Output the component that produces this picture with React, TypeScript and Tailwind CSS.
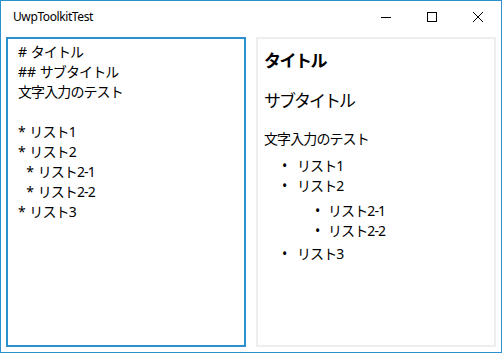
export default function App() {
  const font = { fontFamily: '"Noto Sans", "Noto Sans CJK JP", sans-serif' };
  const P = ({ children }: { children: string }) => (
    <span className="tracking-normal">{children}</span>
  );
  return (
    <div
      className="w-[502px] h-[353px] border border-[#2b90ce] bg-white flex flex-col text-black overflow-hidden"
      style={font}
    >
      <div className="h-[31px] flex items-center shrink-0">
        <div className="pl-[12px] text-[12px] leading-[16px] tracking-[-0.4px]">UwpToolkitTest</div>
        <div className="ml-auto flex h-full">
          <div className="w-[46px] h-full flex items-center justify-center">
            <svg width="10" height="10" viewBox="0 0 10 10">
              <line x1="0" y1="5.5" x2="10" y2="5.5" stroke="#000" strokeWidth="1" />
            </svg>
          </div>
          <div className="w-[46px] h-full flex items-center justify-center">
            <svg width="10" height="10" viewBox="0 0 10 10">
              <rect x="0.5" y="0.5" width="9" height="9" fill="none" stroke="#000" strokeWidth="1" />
            </svg>
          </div>
          <div className="w-[46px] h-full flex items-center justify-center">
            <svg width="10" height="10" viewBox="0 0 10 10">
              <line x1="0" y1="0" x2="10" y2="10" stroke="#000" strokeWidth="1" />
              <line x1="10" y1="0" x2="0" y2="10" stroke="#000" strokeWidth="1" />
            </svg>
          </div>
        </div>
      </div>
      <div className="flex-1 p-[5px] flex gap-[10px]">
        <div className="w-[240px] border-2 border-[#2b90ce] pl-[10px] pt-[3px] text-[14px] leading-[20px] tracking-[-0.9px] whitespace-pre">
          <div><P>{"# "}</P>タイトル</div>
          <div><P>{"## "}</P>サブタイトル</div>
          <div>文字入力のテスト</div>
          <div>{"\u00a0"}</div>
          <div><P>{"* "}</P>リスト1</div>
          <div><P>{"* "}</P>リスト2</div>
          <div><span className="tracking-[0.5px]">  </span><P>{"* "}</P>リスト2-1</div>
          <div><span className="tracking-[0.5px]">  </span><P>{"* "}</P>リスト2-2</div>
          <div><P>{"* "}</P>リスト3</div>
        </div>
        <div className="w-[240px] border-2 border-[#eeeeee] pl-[6px] pt-[10px] flex flex-col">
          <div className="text-[17px] leading-[24px] font-bold tracking-[-1.5px]">タイトル</div>
          <div className="mt-[16px] text-[17px] leading-[24px] tracking-[-2px]">サブタイトル</div>
          <div className="mt-[16px] text-[14px] leading-[20px] tracking-[-0.9px]">文字入力のテスト</div>
          <div className="mt-[7px] text-[14px] leading-[20px] tracking-[-0.9px]">
            <div className="flex">
              <span className="w-[33px] pl-[18px]">•</span>
              <span>リスト1</span>
            </div>
            <div className="flex">
              <span className="w-[33px] pl-[18px]">•</span>
              <span>リスト2</span>
            </div>
            <div className="mt-[5px] pl-[31px]">
              <div className="flex">
                <span className="w-[33px] pl-[20px]">•</span>
                <span>リスト2-1</span>
              </div>
              <div className="flex">
                <span className="w-[33px] pl-[20px]">•</span>
                <span>リスト2-2</span>
              </div>
            </div>
            <div className="mt-[3px] flex">
              <span className="w-[33px] pl-[18px]">•</span>
              <span>リスト3</span>
            </div>
          </div>
        </div>
      </div>
    </div>
  );
}
